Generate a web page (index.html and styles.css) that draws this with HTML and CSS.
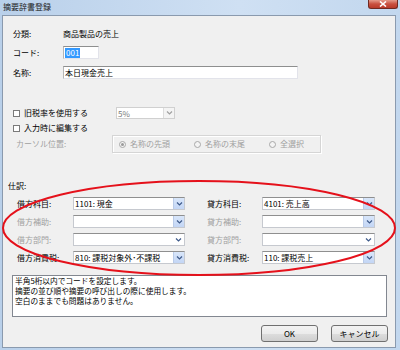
FILE: index.html
```html
<!DOCTYPE html>
<html lang="ja">
<head>
  <meta charset="UTF-8" />
  <title>摘要辞書登録</title>
  <link rel="stylesheet" href="styles.css">
</head>
<body>
  <div class="window">
    <div class="titlebar">
      <span class="title">摘要辞書登録</span>
      <span class="close">
        <svg width="8" height="6" viewBox="0 0 8 6"><path d="M1 0.5 L7 5.5 M7 0.5 L1 5.5" stroke="#fff" stroke-width="1.6"/></svg>
      </span>
    </div>

    <div class="client">
      <div class="row info-row">
        <span class="field-label">分類:</span>
        <span>商品製品の売上</span>
      </div>
      <div class="row code-row">
        <span class="field-label">コード:</span>
        <span class="textbox code-box"><span class="selected">001</span></span>
      </div>
      <div class="row name-row">
        <span class="field-label">名称:</span>
        <span class="textbox name-box">本日現金売上</span>
      </div>

      <div class="row check-row first">
        <span class="check-label"><span class="checkbox"></span>旧税率を使用する</span>
        <span class="combo rate-combo disabled">
          <span class="combo-text">5%</span>
          <span class="combo-btn"><svg width="7" height="4" viewBox="0 0 7 4"><path d="M1 0.5 L3.5 3 L6 0.5" fill="none" stroke="#a0a0a0" stroke-width="1.2"/></svg></span>
        </span>
      </div>
      <div class="row check-row">
        <span class="check-label"><span class="checkbox"></span>入力時に編集する</span>
      </div>
      <div class="row cursor-row">
        <span class="cursor-label">カーソル位置:</span>
        <div class="groupbox">
          <span class="radio-item"><span class="radio checked"></span>名称の先頭</span>
          <span class="radio-item"><span class="radio"></span>名称の末尾</span>
          <span class="radio-item"><span class="radio"></span>全選択</span>
        </div>
      </div>

      <div class="row section-title">仕訳:</div>
      <div class="entry-grid">
        <span class="entry-label">借方科目:</span>
        <span class="combo"><span class="combo-text">1101: 現金</span><span class="combo-btn blue"><svg width="7" height="4" viewBox="0 0 7 4"><path d="M1 0.5 L3.5 3 L6 0.5" fill="none" stroke="#3e5a8a" stroke-width="1.2"/></svg></span></span>
        <span class="entry-label right">貸方科目:</span>
        <span class="combo"><span class="combo-text">4101: 売上高</span><span class="combo-btn blue"><svg width="7" height="4" viewBox="0 0 7 4"><path d="M1 0.5 L3.5 3 L6 0.5" fill="none" stroke="#3e5a8a" stroke-width="1.2"/></svg></span></span>

        <span class="entry-label muted">借方補助:</span>
        <span class="combo"><span class="combo-text"></span><span class="combo-btn blue"><svg width="7" height="4" viewBox="0 0 7 4"><path d="M1 0.5 L3.5 3 L6 0.5" fill="none" stroke="#3e5a8a" stroke-width="1.2"/></svg></span></span>
        <span class="entry-label right muted">貸方補助:</span>
        <span class="combo"><span class="combo-text"></span><span class="combo-btn blue"><svg width="7" height="4" viewBox="0 0 7 4"><path d="M1 0.5 L3.5 3 L6 0.5" fill="none" stroke="#3e5a8a" stroke-width="1.2"/></svg></span></span>

        <span class="entry-label muted">借方部門:</span>
        <span class="combo"><span class="combo-text"></span><span class="combo-btn"><svg width="7" height="4" viewBox="0 0 7 4"><path d="M1 0.5 L3.5 3 L6 0.5" fill="none" stroke="#3e5a8a" stroke-width="1.2"/></svg></span></span>
        <span class="entry-label right muted">貸方部門:</span>
        <span class="combo"><span class="combo-text"></span><span class="combo-btn"><svg width="7" height="4" viewBox="0 0 7 4"><path d="M1 0.5 L3.5 3 L6 0.5" fill="none" stroke="#3e5a8a" stroke-width="1.2"/></svg></span></span>

        <span class="entry-label">借方消費税:</span>
        <span class="combo"><span class="combo-text">810: 課税対象外･不課税</span><span class="combo-btn blue"><svg width="7" height="4" viewBox="0 0 7 4"><path d="M1 0.5 L3.5 3 L6 0.5" fill="none" stroke="#3e5a8a" stroke-width="1.2"/></svg></span></span>
        <span class="entry-label right">貸方消費税:</span>
        <span class="combo"><span class="combo-text">110: 課税売上</span><span class="combo-btn blue"><svg width="7" height="4" viewBox="0 0 7 4"><path d="M1 0.5 L3.5 3 L6 0.5" fill="none" stroke="#3e5a8a" stroke-width="1.2"/></svg></span></span>
      </div>

      <div class="memo">
        <p>半角5桁以内でコードを設定します。</p>
        <p>摘要の並び順や摘要の呼び出しの際に使用します。</p>
        <p>空白のままでも問題はありません。</p>
      </div>

      <div class="actions">
        <button class="btn">OK</button>
        <button class="btn">キャンセル</button>
      </div>
    </div>

    <svg class="mark" width="400" height="350" viewBox="0 0 400 350">
      <ellipse cx="199" cy="228" rx="196" ry="47" fill="none" stroke="#e5111b" stroke-width="2"/>
    </svg>
  </div>
</body>
</html>
```

FILE: styles.css
```css
* {
  box-sizing: border-box;
}

body {
  margin: 0;
  font-family: "Noto Sans CJK JP", "Noto Sans", sans-serif;
  font-size: 8px;
  line-height: 12px;
  color: #000000;
}

.window {
  position: relative;
  width: 400px;
  height: 350px;
  padding: 0 4px 2px 2px;
  display: flex;
  flex-direction: column;
  background: linear-gradient(to right, #b9d0ea, #cfe0f3 60%, #c2d7ee);
  overflow: hidden;
}

.titlebar {
  height: 15px;
  display: flex;
  justify-content: space-between;
  align-items: flex-start;
  padding-left: 1px;
}

.title {
  margin-top: 1px;
  color: #1c1c1c;
}

.close {
  width: 30px;
  height: 9px;
  margin-right: -2px;
  display: flex;
  align-items: center;
  justify-content: center;
  background: linear-gradient(#e59b8b, #c9503f 50%, #b93a2a);
  border: 1px solid #6f2a22;
  border-top: none;
  border-radius: 0 0 3px 3px;
}

.client {
  flex: 1;
  background-color: #f0f0f0;
  border: 1px solid #8a9aae;
  display: flex;
  flex-direction: column;
}

.row {
  display: flex;
  align-items: center;
}

.info-row {
  margin-top: 12px;
  height: 12px;
  padding-left: 10px;
}

.field-label {
  width: 50px;
}

.code-row {
  margin-top: 6px;
  height: 13px;
  padding-left: 10px;
}

.name-row {
  margin-top: 7px;
  height: 13px;
  padding-left: 10px;
}

.textbox {
  height: 13px;
  background-color: #ffffff;
  border: 1px solid #e2e3ea;
  border-top-color: #8e8f8f;
  border-left-color: #b5b5b5;
  display: flex;
  align-items: center;
  padding-left: 1px;
}

.code-box {
  width: 36px;
}

.name-box {
  width: 235px;
}

.selected {
  background-color: #3399ff;
  color: #ffffff;
  padding: 0 1px;
  line-height: 10px;
}

.check-row {
  margin-top: 3px;
  height: 12px;
  padding-left: 10px;
}

.check-row.first {
  margin-top: 28px;
}

.check-label {
  width: 103px;
  display: flex;
  align-items: center;
  gap: 4px;
}

.checkbox {
  width: 7px;
  height: 7px;
  border: 1px solid #7a7a7a;
  background-color: #ffffff;
}

.combo {
  height: 13px;
  display: flex;
  background-color: #ffffff;
  border: 1px solid #c6c9cf;
  border-top-color: #8f8f8f;
}

.combo-text {
  flex: 1;
  padding-left: 1px;
  line-height: 11px;
  white-space: nowrap;
  overflow: hidden;
}

.combo-btn {
  width: 11px;
  display: flex;
  align-items: center;
  justify-content: center;
}

.combo-btn.blue {
  background: linear-gradient(#d9e6fa, #c3d6f5);
  border-left: 1px solid #b9cbe8;
}

.rate-combo {
  width: 59px;
  height: 12px;
}

.disabled {
  border-color: #d0d0d0;
  color: #7a7a7a;
}

.disabled .combo-btn {
  background-color: #f4f4f4;
  border-left: 1px solid #dddddd;
}

.cursor-row {
  margin-top: 1px;
  height: 18px;
  padding-left: 13px;
}

.cursor-label {
  width: 96px;
  color: #a0a0a0;
}

.groupbox {
  width: 209px;
  height: 18px;
  display: flex;
  align-items: center;
  border: 1px solid #d5d5d5;
  box-shadow: inset 1px 1px 0 #ffffff, 1px 1px 0 #ffffff;
  color: #a0a0a0;
  padding-left: 6px;
}

.radio-item {
  display: flex;
  align-items: center;
  gap: 4px;
  width: 75px;
}

.radio-item:last-child {
  width: auto;
}

.radio {
  width: 7px;
  height: 7px;
  border: 1px solid #a8a8a8;
  border-radius: 50%;
  background-color: #f4f4f4;
  position: relative;
}

.radio.checked::after {
  content: "";
  position: absolute;
  left: 1px;
  top: 1px;
  width: 3px;
  height: 3px;
  border-radius: 50%;
  background-color: #9a9a9a;
}

.section-title {
  margin-top: 27px;
  height: 12px;
  padding-left: 5px;
}

.entry-grid {
  margin-top: 5px;
  padding-left: 14px;
  display: grid;
  grid-template-columns: 56px 112px 77px 113px;
  grid-auto-rows: 13px;
  row-gap: 5px;
  align-items: center;
}

.entry-label.right {
  padding-left: 22px;
}

.muted {
  color: #a0a0a0;
}

.memo {
  margin: 11px 0 0 9px;
  width: 375px;
  height: 42px;
  background-color: #ffffff;
  border: 1px solid #828790;
  padding: 0 2px;
  font-size: 7.7px;
  line-height: 10px;
}

.memo p {
  margin: 0;
}

.actions {
  margin-top: 8px;
  height: 17px;
  display: flex;
  justify-content: flex-end;
  gap: 13px;
  padding-right: 7px;
}

.btn {
  width: 57px;
  height: 17px;
  padding: 0;
  font-family: inherit;
  font-size: 8px;
  color: #000000;
  background: linear-gradient(#f3f3f3, #ebebeb 50%, #dddddd 51%, #cfcfcf);
  border: 1px solid #707070;
  border-radius: 3px;
}

.mark {
  position: absolute;
  left: 0;
  top: 0;
  pointer-events: none;
}
```
